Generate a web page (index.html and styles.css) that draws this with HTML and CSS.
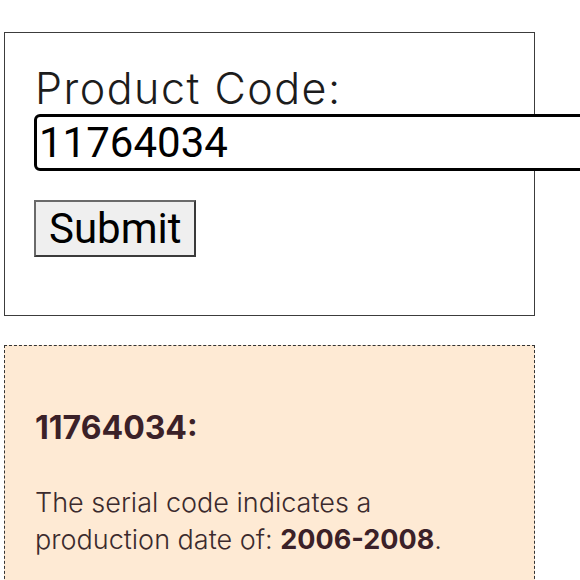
FILE: index.html
```html
<!DOCTYPE html>
<html lang="en">
<head>
<meta charset="utf-8">
<title>Product Code Lookup</title>
<link rel="stylesheet" href="styles.css">
</head>
<body>
<main class="page">
  <form class="lookup">
    <label class="lookup-label" for="code">Product Code:</label>
    <input class="lookup-input" id="code" type="text" value="11764034">
    <button class="lookup-button" type="button">Submit</button>
  </form>
  <section class="result">
    <h2 class="result-title">11764034:</h2>
    <p class="result-text">The serial code indicates a production date of: <strong>2006-2008</strong>.</p>
  </section>
</main>
</body>
</html>
```
FILE: styles.css
```css
html {
  overflow: hidden;
}
body {
  margin: 0;
  background: #ffffff;
}
.page {
  padding: 32px 0 0 4px;
  width: 531px;
}
.lookup {
  border: 1px solid #3c3c3c;
  padding: 30px 30px 58px 30px;
  display: flex;
  flex-direction: column;
  align-items: flex-start;
}
.lookup-label {
  font-family: "Inter", "Noto Sans", sans-serif;
  font-weight: 300;
  font-size: 43px;
  line-height: 50px;
  letter-spacing: 1.5px;
  color: #1c1c1c;
  margin-bottom: 1px;
}
.lookup-input {
  box-sizing: border-box;
  width: 570px;
  height: 57px;
  margin: 0 0 0 -1px;
  border: 3px solid #000000;
  border-radius: 6px;
  padding: 0 2px;
  font-family: "Roboto", sans-serif;
  font-size: 42px;
  color: #000000;
  background: #ffffff;
  outline: none;
}
.lookup-button {
  box-sizing: border-box;
  height: 57px;
  margin: 29px 0 0 -1px;
  padding: 0 13px;
  border-width: 2px;
  border-style: solid;
  border-color: #6a6a6a #3a3a3a #3a3a3a #6a6a6a;
  border-radius: 0;
  background: #efefef;
  font-family: "Roboto", sans-serif;
  font-size: 42px;
  color: #000000;
}
.result {
  margin-top: 29px;
  border: 1px dashed #333333;
  background: #feead4;
  padding: 62px 30px 40px 30px;
  color: #3b2128;
}
.result-title {
  margin: 0;
  font-family: "Inter", "Noto Sans", sans-serif;
  font-weight: 700;
  font-size: 32px;
  line-height: 40px;
}
.result-text {
  margin: 36px 0 0 0;
  font-family: "Inter", "Noto Sans", sans-serif;
  font-weight: 300;
  font-size: 27px;
  line-height: 37px;
  color: #3b2a2d;
}
.result-text strong {
  font-weight: 700;
  color: #3b2128;
}
```
